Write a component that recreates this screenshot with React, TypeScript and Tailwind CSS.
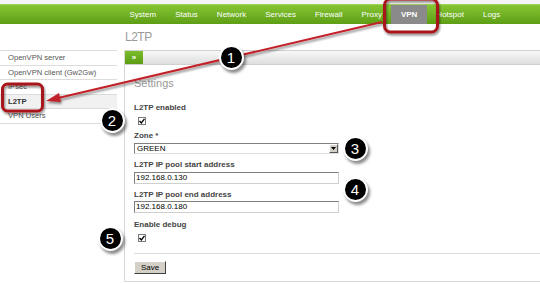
import React from "react";

const navItems = ["System", "Status", "Network", "Services", "Firewall", "Proxy", "VPN", "Hotspot", "Logs"];
const sideItems = ["OpenVPN server", "OpenVPN client (Gw2Gw)", "IPsec", "L2TP", "VPN Users"];

function Check() {
  return (
    <div className="w-[8px] h-[8px] border border-[#7a7a7a] bg-white flex items-center justify-center">
      <svg width="6" height="6" viewBox="0 0 6 6">
        <path d="M0.5 3 L2.3 5 L5.5 0.8" stroke="#000" strokeWidth="1.3" fill="none" />
      </svg>
    </div>
  );
}

function Badge({ n, x, y }: { n: string; x: number; y: number }) {
  return (
    <div
      className="absolute w-[25px] h-[25px] rounded-full bg-black border-2 border-white flex items-center justify-center text-white text-[15px] leading-none shadow-[2px_3px_3px_rgba(0,0,0,0.45)]"
      style={{ left: x - 12.5, top: y - 12.5, fontFamily: '"Liberation Sans", Arial, sans-serif' }}
    >
      {n}
    </div>
  );
}

export default function App() {
  return (
    <div
      className="relative w-[540px] h-[284px] overflow-hidden bg-white text-[#333]"
      style={{ fontFamily: '"Liberation Sans", Arial, sans-serif' }}
    >
      <div className="h-[4px] bg-[#f4f4f4]" />
      <div className="h-[20px] flex items-stretch pl-[120px] bg-gradient-to-b from-[#86c634] to-[#5d9e14] border-t border-[#9fd35a]">
        {navItems.map((t) => (
          <div
            key={t}
            className={
              "px-[9.5px] flex items-center text-[8px] text-white " +
              (t === "VPN" ? "bg-[#8a8a8a] font-bold" : "")
            }
          >
            {t}
          </div>
        ))}
      </div>
      <div className="flex">
        <div className="w-[117px] pt-[26px] shrink-0">
          <div className="border-t border-[#dcdcdc]">
            {sideItems.map((t) => (
              <div
                key={t}
                className={
                  "h-[14.5px] flex items-center pl-[8px] text-[7.6px] border-b border-[#dcdcdc] " +
                  (t === "L2TP" ? "bg-[#f1f1f1] font-bold text-[#333]" : "text-[#555]")
                }
              >
                {t}
              </div>
            ))}
          </div>
        </div>
        <div className="flex-1 pl-[7px]">
          <div className="h-[26px] flex items-center pl-[1px] text-[12px] text-[#9a9a9a] tracking-[-0.5px]">L2TP</div>
          <div className="border-l border-b border-[#d8d8d8] h-[232px]">
            <div className="flex h-[15px] border-t border-b border-[#d0d0d0]">
              <div className="w-[18px] bg-gradient-to-b from-[#7bbd2a] to-[#5c9c14] flex items-center justify-center text-white text-[8px] font-bold leading-none">
                »
              </div>
              <div className="flex-1 bg-gradient-to-b from-[#f8f8f8] to-[#dedede]" />
            </div>
            <div className="pl-[9px]">
              <div className="mt-[12px] h-[13px] leading-[13px] text-[11px] text-[#999]">Settings</div>
              <div className="mt-[13px] h-[10px] leading-[10px] text-[8px] font-bold text-[#444]">L2TP enabled</div>
              <div className="mt-[4px] pl-[4px]"><Check /></div>
              <div className="mt-[6px] h-[10px] leading-[10px] text-[8px] font-bold text-[#444]">Zone *</div>
              <div className="mt-[2px] w-[205px] h-[11px] flex border border-t-[#808080] border-l-[#808080] border-r-[#e0e0e0] border-b-[#e0e0e0] bg-white">
                <div className="flex-1 pl-[2px] text-[8px] leading-[9px] text-black">GREEN</div>
                <div className="w-[9px] h-[9px] bg-[#d4d0c8] border border-t-white border-l-white border-r-[#555] border-b-[#555] flex items-center justify-center">
                  <svg width="5" height="3" viewBox="0 0 5 3"><path d="M0 0H5L2.5 3Z" fill="#000" /></svg>
                </div>
              </div>
              <div className="mt-[6px] h-[10px] leading-[10px] text-[8px] font-bold text-[#444]">L2TP IP pool start address</div>
              <div className="mt-[2px] w-[205px] h-[12px] border border-[#7f7f7f] border-b-[#cfcfcf] border-r-[#cfcfcf] pl-[1px] text-[8px] leading-[10px] text-black">192.168.0.130</div>
              <div className="mt-[6px] h-[10px] leading-[10px] text-[8px] font-bold text-[#444]">L2TP IP pool end address</div>
              <div className="mt-[1px] w-[205px] h-[12px] border border-[#7f7f7f] border-b-[#cfcfcf] border-r-[#cfcfcf] pl-[1px] text-[8px] leading-[10px] text-black">192.168.0.180</div>
              <div className="mt-[7px] h-[10px] leading-[10px] text-[8px] font-bold text-[#444]">Enable debug</div>
              <div className="mt-[4px] pl-[4px]"><Check /></div>
              <div className="mt-[11px] h-[1px] bg-[#dcdcdc]" />
              <div className="mt-[7px] w-[32px] h-[13px] bg-[#d4d0c8] border border-t-white border-l-white border-r-[#404040] border-b-[#404040] flex items-center justify-center text-[8px] text-black">
                Save
              </div>
            </div>
          </div>
        </div>
      </div>

      <svg className="absolute inset-0 pointer-events-none" width="540" height="284">
        <defs>
          <filter id="sh" x="-20%" y="-20%" width="140%" height="140%">
            <feDropShadow dx="1" dy="2" stdDeviation="1.2" floodColor="#000" floodOpacity="0.45" />
          </filter>
        </defs>
        <g filter="url(#sh)">
          <line x1="382" y1="22" x2="58" y2="98" stroke="#c1222a" strokeWidth="2" />
          <path d="M46 101 L59 93 L61 102 Z" fill="#c1222a" />
          <rect x="384.5" y="-1" width="53" height="33" rx="6" fill="none" stroke="#a8151c" strokeWidth="3" />
          <rect x="2.5" y="84" width="40" height="27" rx="5" fill="none" stroke="#a8151c" strokeWidth="3" />
        </g>
      </svg>
      <Badge n="1" x={231} y={57} />
      <Badge n="2" x={112} y={120} />
      <Badge n="3" x={355} y={148} />
      <Badge n="4" x={355} y={189} />
      <Badge n="5" x={110} y={238} />
    </div>
  );
}
